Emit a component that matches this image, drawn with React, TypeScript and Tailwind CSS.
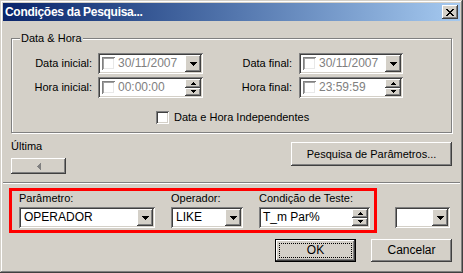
import React from 'react'

// classic 3d bevels
const RAISED = 'shadow-[inset_-1px_-1px_#404040,inset_1px_1px_#ffffff,inset_-2px_-2px_#808080,inset_2px_2px_#d4d0c8]'
const SUNKEN = 'shadow-[inset_1px_1px_#808080,inset_-1px_-1px_#ffffff,inset_2px_2px_#404040,inset_-2px_-2px_#d4d0c8]'

function DownTri() {
  return (
    <svg width="7" height="4" shapeRendering="crispEdges" fill="#000">
      <rect x="0" y="0" width="7" height="1" />
      <rect x="1" y="1" width="5" height="1" />
      <rect x="2" y="2" width="3" height="1" />
      <rect x="3" y="3" width="1" height="1" />
    </svg>
  )
}

function SmallTri({ up }: { up?: boolean }) {
  return (
    <svg width="5" height="3" shapeRendering="crispEdges" fill="#000" className={up ? 'rotate-180' : ''}>
      <rect x="0" y="0" width="5" height="1" />
      <rect x="1" y="1" width="3" height="1" />
      <rect x="2" y="2" width="1" height="1" />
    </svg>
  )
}

function DropBtn() {
  return (
    <div className={`w-[16px] shrink-0 flex items-center justify-center bg-[#d4d0c8] ${RAISED}`}>
      <DownTri />
    </div>
  )
}

function SpinBtns() {
  return (
    <div className="w-[16px] shrink-0 flex flex-col">
      <div className={`flex-1 flex items-center justify-center bg-[#d4d0c8] ${RAISED}`}><SmallTri up /></div>
      <div className={`flex-1 flex items-center justify-center bg-[#d4d0c8] ${RAISED}`}><SmallTri /></div>
    </div>
  )
}

function CheckBox() {
  return <div className={`w-[13px] h-[13px] shrink-0 bg-white ${SUNKEN}`} />
}

function DateField({ value, spin, className }: { value: string; spin?: boolean; className: string }) {
  return (
    <div className={`flex h-[21px] bg-white p-[2px] ${SUNKEN} ${className}`}>
      <div className="flex-1 flex items-center pl-[2px]">
        <div className="w-[13px] h-[13px] bg-white shadow-[inset_1px_1px_#808080,inset_-1px_-1px_#ffffff,inset_2px_2px_#a0a0a0,inset_-2px_-2px_#e8e8e8]" />
        <span className="ml-[3px] text-[#808080] text-[12px]">{value}</span>
      </div>
      {spin ? <SpinBtns /> : <DropBtn />}
    </div>
  )
}

function Combo({ value, className }: { value: string; className: string }) {
  return (
    <div className={`flex h-[21px] bg-white p-[2px] ${SUNKEN} ${className}`}>
      <div className="flex-1 flex items-center pl-[3px] text-[12px] text-black">{value}</div>
      <DropBtn />
    </div>
  )
}

function Btn({ children, className }: { children?: React.ReactNode; className: string }) {
  return (
    <div className={`flex items-center justify-center bg-[#d4d0c8] ${RAISED} ${className}`}>{children}</div>
  )
}

export default function App() {
  return (
    <div className="w-[463px] h-[273px] bg-[#d4d0c8] p-[3px] flex flex-col font-['Liberation_Sans',Arial,sans-serif] text-[11px] leading-[13px] text-black shadow-[inset_-1px_-1px_#404040,inset_1px_1px_#d4d0c8,inset_-2px_-2px_#808080,inset_2px_2px_#ffffff]">
      {/* title bar */}
      <div className="h-[18px] flex items-center justify-between pl-[2px] pr-[2px] bg-gradient-to-r from-[#0a246a] to-[#a6caf0]">
        <span className="text-white font-bold text-[12px] tracking-[-0.3px]">Condições da Pesquisa...</span>
        <Btn className="w-[16px] h-[14px]">
          <svg width="8" height="7" shapeRendering="crispEdges" fill="#000">
            <path d="M0 0h2l2 2.5L6 0h2L5 3.5 8 7H6L4 4.5 2 7H0l3-3.5z" />
          </svg>
        </Btn>
      </div>

      <div className="flex-1 flex flex-col px-[8px]">
        <fieldset className="mt-[11px] border border-[#808080] shadow-[inset_1px_1px_#ffffff,1px_1px_#ffffff] pb-[8px]">
          <legend className="ml-[8px] px-[1px] bg-[#d4d0c8]">Data &amp; Hora</legend>
          <div className="mt-[8px] flex items-center">
            <span className="w-[80px] text-right">Data inicial:</span>
            <DateField value="30/11/2007" className="ml-[6px] w-[105px]" />
            <span className="w-[89px] text-right">Data final:</span>
            <DateField value="30/11/2007" className="ml-[7px] w-[104px]" />
          </div>
          <div className="mt-[3px] flex items-center">
            <span className="w-[80px] text-right">Hora inicial:</span>
            <DateField value="00:00:00" spin className="ml-[6px] w-[105px]" />
            <span className="w-[89px] text-right">Hora final:</span>
            <DateField value="23:59:59" spin className="ml-[7px] w-[104px]" />
          </div>
          <div className="mt-[13px] flex items-center pl-[144px]">
            <CheckBox />
            <span className="ml-[5px]">Data e Hora Independentes</span>
          </div>
        </fieldset>

        <div className="flex justify-between">
          <div className="flex flex-col">
            <span className="mt-[7px]">Última</span>
            <Btn className="mt-[5px] w-[55px] h-[16px]">
              <svg width="4" height="7" shapeRendering="crispEdges">
                <rect x="3" y="0" width="1" height="7" fill="#808080" />
                <rect x="2" y="1" width="1" height="5" fill="#808080" />
                <rect x="1" y="2" width="1" height="3" fill="#808080" />
                <rect x="0" y="3" width="1" height="1" fill="#808080" />
              </svg>
            </Btn>
          </div>
          <Btn className="mt-[9px] w-[161px] h-[24px]">Pesquisa de Parâmetros...</Btn>
        </div>

        <div className="mt-[8px] -mx-[8px] h-[2px] border-t border-[#808080] border-b border-b-white" />

        <div className="mt-[4px] flex items-end">
          <div className="-ml-[2px] border-[3px] border-[#ff0000] flex gap-[16px] pl-[7px] pr-[4px] pt-[1px] pb-[2px]">
            <div className="flex flex-col">
              <span>Parâmetro:</span>
              <Combo value="OPERADOR" className="mt-[2px] w-[136px]" />
            </div>
            <div className="flex flex-col">
              <span>Operador:</span>
              <Combo value="LIKE" className="mt-[2px] w-[72px]" />
            </div>
            <div className="flex flex-col">
              <span>Condição de Teste:</span>
              <div className={`mt-[2px] w-[111px] flex h-[21px] bg-white p-[2px] ${SUNKEN}`}>
                <div className="flex-1 flex items-center pl-[2px] text-[12px]">T_m Par%</div>
                <SpinBtns />
              </div>
            </div>
          </div>
          <Combo value="" className="ml-[18px] mb-[5px] w-[55px]" />
        </div>

        <div className="mt-[6px] flex justify-end gap-[15px]">
          <div className="w-[81px] h-[23px] border border-black flex">
            <div className={`flex-1 flex p-[3px] bg-[#d4d0c8] shadow-[inset_-1px_-1px_#404040,inset_1px_1px_#ffffff,inset_-2px_-2px_#808080]`}>
              <div className="flex-1 border border-dotted border-black flex items-center justify-center text-[12px]">OK</div>
            </div>
          </div>
          <Btn className="w-[81px] h-[23px] text-[12px]">Cancelar</Btn>
        </div>
      </div>
    </div>
  )
}
